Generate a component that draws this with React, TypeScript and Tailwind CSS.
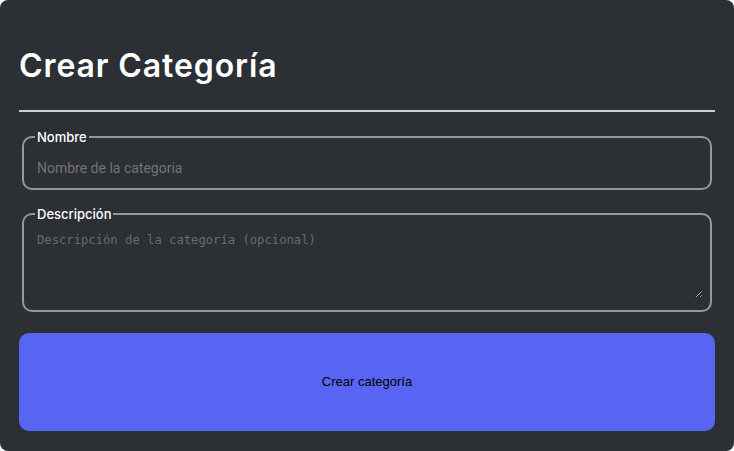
import React from 'react';

const App: React.FC = () => {
  return (
    <div className="min-h-screen bg-white">
      <div className="w-[734px] h-[451px] rounded-lg bg-[#2c2f33] px-[19px] pt-[19px] pb-[20px] flex flex-col">
        {/* Título */}
        <h1 className="mt-[23px] text-[32px] leading-[48px] font-semibold text-white font-['Inter',sans-serif] tracking-[0.9px]">
          Crear Categoría
        </h1>
        <hr className="mt-[20px] border-0 border-t-2 border-[#cfcfcf]" />

        <form className="flex flex-col flex-1" onSubmit={(e) => e.preventDefault()}>
          {/* Nombre */}
          <fieldset className="mt-[15px] mx-[3px] border-2 border-[#979797] rounded-[10px] px-[11px]">
            <legend className="px-[2px] text-[13px] leading-[20px] font-medium text-white font-['Inter',sans-serif]">
              Nombre
            </legend>
            <input
              type="text"
              placeholder="Nombre de la categoria"
              className="w-full h-[41px] bg-transparent px-[2px] text-[14px] text-white placeholder:text-[#737373] outline-none font-['Roboto',sans-serif]"
            />
          </fieldset>

          {/* Descripción */}
          <fieldset className="mt-[14px] mx-[3px] border-2 border-[#979797] rounded-[10px] pl-[11px] pr-[7px] pb-[12px]">
            <legend className="px-[2px] text-[13px] leading-[20px] font-medium text-white font-['Inter',sans-serif]">
              Descripción
            </legend>
            <textarea
              placeholder="Descripción de la categoría (opcional)"
              className="block w-full h-[74px] bg-transparent px-[2px] pt-[8px] text-[12.2px] leading-[16px] text-white placeholder:text-[#6b6b6b] outline-none font-['DejaVu_Sans_Mono',monospace]"
            />
          </fieldset>

          <button
            type="submit"
            className="mt-[21px] flex-1 rounded-[10px] bg-[#5865f2] text-[13px] text-black font-['Liberation_Sans',Arial,sans-serif]"
          >
            Crear categoría
          </button>
        </form>
      </div>
    </div>
  );
};

export default App;
